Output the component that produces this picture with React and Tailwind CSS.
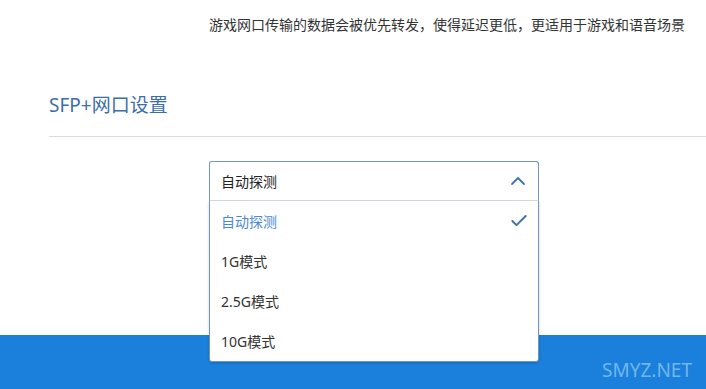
import { Check, ChevronUp } from 'lucide-react';

const options = ['自动探测', '1G模式', '2.5G模式', '10G模式'];

const App = () => {
  const selected = '自动探测';

  return (
    <div className="w-[706px] h-[389px] overflow-hidden bg-white flex flex-col font-['Noto_Sans','Noto_Sans_CJK_SC',sans-serif]">
      <p className="pl-[209px] pt-[16px] text-[14px] leading-[18px] text-[#333]">
        游戏网口传输的数据会被优先转发，使得延迟更低，更适用于游戏和语音场景
      </p>

      <h2 className="ml-[49px] mt-[59px] text-[19px] leading-[24px] text-[#3b6ea6]">SFP+网口设置</h2>
      <div className="ml-[49px] mt-[19px] h-px bg-[#dcdcdc]" />

      <div className="relative z-10 ml-[209px] mt-[24px] w-[330px]">
        <div className="h-[40px] flex items-center justify-between pl-[11px] pr-[8px] border border-[#7096be] border-b-[#d5dde6] rounded-t-[3px] bg-white">
          <span className="text-[14px] text-[#222]">{selected}</span>
          <ChevronUp className="w-[24px] h-[24px] text-[#3d74ad]" strokeWidth={1.8} />
        </div>
        <ul className="absolute left-0 right-0 top-[40px] border border-t-0 border-[#7096be] rounded-b-[3px] bg-white shadow-[0_1px_3px_rgba(0,0,0,0.2)]">
          {options.map((o) => (
            <li key={o} className="h-[40px] flex items-center justify-between pl-[11px] pr-[9px]">
              <span className={`text-[14px] ${o === selected ? 'text-[#4a8ad6]' : 'text-[#333]'}`}>{o}</span>
              {o === selected && <Check className="w-[20px] h-[20px] text-[#3d74ad]" strokeWidth={2.4} />}
            </li>
          ))}
        </ul>
      </div>

      <div className="mt-auto h-[54px] bg-[#1a80dc] flex items-end justify-end pr-[14px] pb-[7px]">
        <span className="text-[19px] leading-[24px] text-[#72b6ea]">SMYZ.NET</span>
      </div>
    </div>
  );
};

export default App;
